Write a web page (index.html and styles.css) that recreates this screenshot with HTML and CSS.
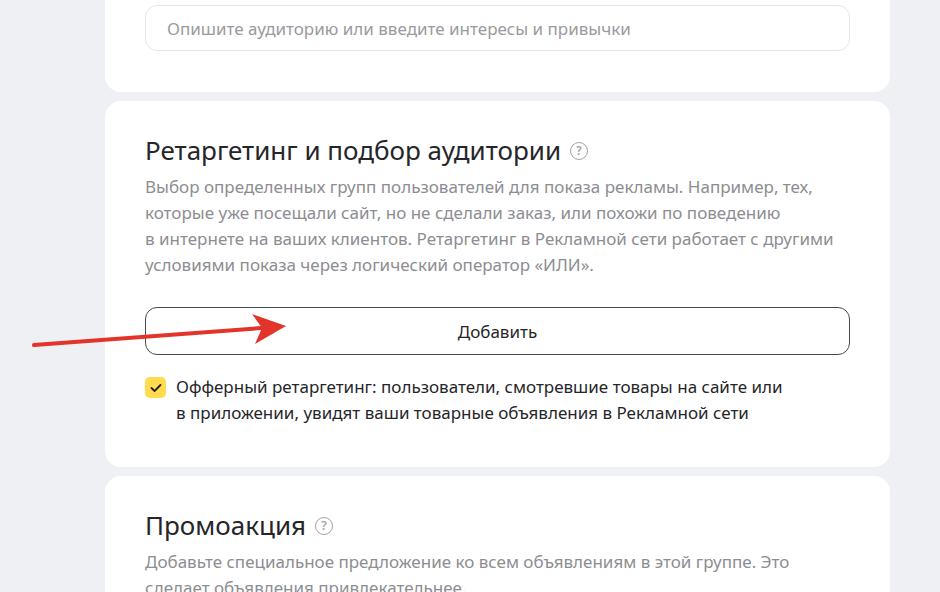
FILE: index.html
```
<!DOCTYPE html>
<html lang="ru">

<head>
    <meta charset="UTF-8">
    <meta name="viewport" content="width=device-width, initial-scale=1.0">
    <title>Ретаргетинг</title>
    <link rel="stylesheet" href="styles.css">
</head>

<body>

    <div class="wrapper">
        <div class="card card--top">
            <input class="field" type="text" placeholder="Опишите аудиторию или введите интересы и привычки">
        </div>

        <div class="card">
            <h2 class="card__title">Ретаргетинг и подбор аудитории <span class="hint">?</span></h2>
            <p class="card__text">Выбор определенных групп пользователей для показа рекламы. Например, тех,<br>
                которые уже посещали сайт, но не сделали заказ, или похожи по поведению<br>
                в интернете на ваших клиентов. Ретаргетинг в Рекламной сети работает с другими<br>
                условиями показа через логический оператор «ИЛИ».</p>
            <button class="btn">Добавить</button>
            <label class="check">
                <span class="check__box">
                    <svg width="12" height="10" viewBox="0 0 12 10">
                        <path d="M1.5 5 L4.6 8 L10.5 2" fill="none" stroke="#222" stroke-width="1.8"
                            stroke-linecap="round" stroke-linejoin="round" />
                    </svg>
                </span>
                <span class="check__label">Офферный ретаргетинг: пользователи, смотревшие товары на сайте или<br>
                    в приложении, увидят ваши товарные объявления в Рекламной сети</span>
            </label>
        </div>

        <div class="card">
            <h2 class="card__title">Промоакция <span class="hint">?</span></h2>
            <p class="card__text">Добавьте специальное предложение ко всем объявлениям в этой группе. Это<br>
                сделает объявления привлекательнее.</p>
        </div>
    </div>

    <svg class="arrow" width="300" height="60" viewBox="0 0 300 60">
        <line x1="34" y1="36" x2="262" y2="19" stroke="#e2342b" stroke-width="4" stroke-linecap="round" />
        <path d="M286 17 L252 5 L262 19 L255 35 Z" fill="#e2342b" />
    </svg>

</body>

</html>
```

FILE: styles.css
```
* {
    margin: 0;
    padding: 0;
    box-sizing: border-box;
}

:root {
    --bg: #eff0f4;
    --text: #26262a;
    --gray: #8d8d93;
}

body {
    font-family: "Noto Sans", "Open Sans", sans-serif;
    background: var(--bg);
    color: var(--text);
    overflow: hidden;
    height: 592px;
}

.wrapper {
    display: flex;
    flex-direction: column;
    gap: 9px;
    width: 785px;
    margin-left: 105px;
}

.card {
    background: #fff;
    border-radius: 16px;
    padding: 34px 40px 41px;
}

.card--top {
    margin-top: -40px;
    padding-top: 45px;
}

.field {
    width: 100%;
    height: 46px;
    border: 1px solid #e6e6ea;
    border-radius: 12px;
    padding: 0 21px;
    font-family: inherit;
    font-size: 17px;
    outline: none;
}

.field::placeholder {
    color: #9a9aa0;
}

.card__title {
    font-size: 26px;
    line-height: 30px;
    font-weight: 400;
    margin-bottom: 9px;
    display: flex;
    align-items: center;
    gap: 9px;
}

.hint {
    display: inline-flex;
    align-items: center;
    justify-content: center;
    width: 18px;
    height: 18px;
    border: 1.5px solid #a2a2a8;
    border-radius: 50%;
    font-size: 12px;
    line-height: 1;
    color: #a2a2a8;
    font-weight: 600;
    margin-top: 2px;
}

.card__text {
    font-size: 17px;
    line-height: 26px;
    color: var(--gray);
}

.btn {
    display: block;
    width: 100%;
    height: 48px;
    margin-top: 29px;
    border: 1.5px solid #4a4a4e;
    border-radius: 12px;
    background: #fff;
    font-family: inherit;
    font-size: 17px;
    color: var(--text);
}

.check {
    display: flex;
    gap: 10px;
    margin-top: 19px;
}

.check__box {
    flex: none;
    width: 21px;
    height: 21px;
    margin-top: 3px;
    border-radius: 5px;
    background: #ffdb4d;
    display: flex;
    align-items: center;
    justify-content: center;
}

.check__label {
    font-size: 17px;
    line-height: 26px;
}

.arrow {
    position: absolute;
    left: 0;
    top: 309px;
}
```
